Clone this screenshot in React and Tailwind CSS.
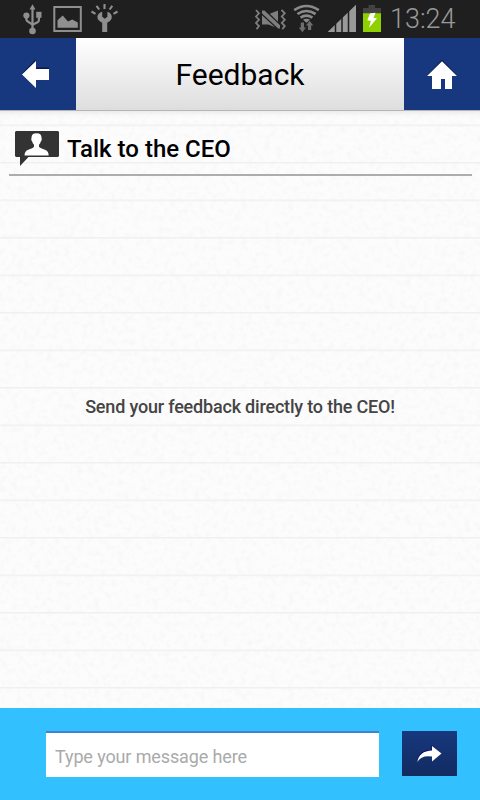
import React from 'react';

function UsbIcon() {
  return (
    <svg className="ml-[23px] h-[38px] w-[20px] shrink-0" viewBox="23 0 20 38" fill="#8f8f8f">
      <path d="M32.5 4.2 35.5 9.6H29.5Z" />
      <circle cx="26.4" cy="15.6" r="3.1" />
      <path d="M36.2 11.800h5.300v6h-5.300z" />
      <circle cx="32.5" cy="31" r="3.3" />
      <path d="M32.5 8v22M26.4 15v4.6q0 1.4 1.4 2l4.7 3M38.9 15v5.2q0 1.4-1.4 2l-5 2.600" fill="none" stroke="#8f8f8f" strokeWidth="2.2" />
    </svg>
  );
}

function PictureIcon() {
  return (
    <svg className="ml-[10px] h-[38px] w-[30px] shrink-0" viewBox="53 0 30 38">
      <path d="M54.3 7h26.500v24H54.3z" fill="none" stroke="#8f8f8f" strokeWidth="2" />
      <path d="M57.500 27.800v-7.500l5.200-4.800 5.300 6 4.200-2 5.600 3v5.300z" fill="#8f8f8f" />
    </svg>
  );
}

function WrenchIcon() {
  return (
    <svg className="ml-[7px] h-[38px] w-[30px] shrink-0" viewBox="90 0 30 38">
      <path d="M102.200 11.800v5l2.600 2 2.600-2v-5c2.600.7 4.400 2.800 4.400 5.200 0 2.600-1.600 4-4.600 5.800V32h-5v-9.200c-3-1.800-4.800-3.200-4.800-5.800 0-2.400 2-4.500 4.800-5.200z" fill="#8f8f8f" />
      <path d="m91.500 11.500 4 2.300M96.500 5.800l2.700 3.700M104.500 4v5M112.300 5.800l-2.700 3.700M117.500 11.500l-4 2.300" stroke="#8f8f8f" strokeWidth="2.100" />
    </svg>
  );
}

function SilentIcon() {
  return (
    <svg className="h-[38px] w-[33px] shrink-0" viewBox="254 0 33 38" fill="#7e7e7e">
      <path d="M262 10.500h2.500L280 25.200v3.300h-1.800L262 13.400z" />
      <path d="M262 15.300 275 27.300 268.500 24.500H262z" />
      <path d="M269.800 13.800 278 10.500V21.700z" />
      <g fill="none" stroke="#7e7e7e" strokeWidth="1.800">
        <path d="m256 10 3 3.300-3 3.200 3 3.200-3 3.200 3 3.200-2.500 3" />
        <path d="m281.500 10 3.300 3.300-3 3.200 3 3.200-3 3.200 3 3.200-2.500 3" />
      </g>
    </svg>
  );
}

function WifiIcon() {
  return (
    <svg className="ml-[6px] h-[38px] w-[27px] shrink-0" viewBox="293 0 27 38">
      <g fill="none" stroke="#898989" strokeWidth="2.700">
        <path d="M294.200 10.200q12.200-8.400 24.600 0" />
        <path d="M297.400 14q9-6 18.200 0" />
        <path d="M300.600 17.700q5.900-4 11.800 0" />
      </g>
      <path d="M303 19.800q3.500-2 7 0l-3.500 3z" fill="#898989" />
      <path d="M300.800 22.500h3.200v5h2l-3.600 4.800-3.600-4.800h2zM308 30h3.200v-4.500h2l-3.600-4.800-3.600 4.800h2z" fill="#6e6e6e" />
    </svg>
  );
}

function SignalIcon() {
  return (
    <svg className="ml-[7px] h-[38px] w-[30px] shrink-0" viewBox="327 0 30 38">
      <path d="M327.600 32 356 4.800V32z" fill="#999" />
      <path d="M335.500 20v13M342 14v19M348.500 8v25" stroke="#1f1f1f" strokeWidth="1.500" />
    </svg>
  );
}

function BatteryIcon() {
  return (
    <svg className="ml-[6px] h-[38px] w-[18px] shrink-0" viewBox="363 0 18 38">
      <path d="M363 8h5.500V5h6.500v3h6v5.300h-18z" fill="#424242" />
      <path d="M363 13.200h18V32h-18z" fill="#8fd000" />
      <path d="m370 13.500 5.500-.7-2 5.200 3.500.3-8 9.500 1.900-6.800-3.600-.8z" fill="white" />
    </svg>
  );
}

function StatusBar() {
  return (
    <div className="flex h-[38px] shrink-0 items-center bg-[#1f1f1f]">
      <UsbIcon />
      <PictureIcon />
      <WrenchIcon />
      <div className="flex-1" />
      <SilentIcon />
      <WifiIcon />
      <SignalIcon />
      <BatteryIcon />
      <span className="ml-[9px] w-[90px] text-[27px] leading-[38px] font-light text-[#999]">13:24</span>
    </div>
  );
}

function Header() {
  return (
    <header className="flex h-[72px] shrink-0">
      <button className="w-[76px] bg-[#17387e]" aria-label="Back">
        <svg className="h-[72px] w-[76px]" viewBox="0 38 76 72">
          <path d="M22 73.500 35.500 59.500V67.500H49V69H36z" fill="#08174f" />
          <path d="M22 74.500 36 61v8h13v11H36v8z" fill="white" />
        </svg>
      </button>
      <h1 className="flex-1 bg-linear-to-b from-white to-[#dedede] text-center text-[30px] leading-[73px] font-normal text-black">Feedback</h1>
      <button className="w-[76px] bg-[#17387e]" aria-label="Home">
        <svg className="h-[72px] w-[76px]" viewBox="404 38 76 72">
          <path d="M426.500 76 442 59.800 457.500 76z" fill="#08174f" />
          <path d="M427 76 442 61.200 457 76h-5v13h-7V79h-4v10h-9V76z" fill="white" />
        </svg>
      </button>
    </header>
  );
}

function PaperTexture() {
  return (
    <svg className="absolute inset-0 h-full w-full" viewBox="0 0 480 598" aria-hidden="true">
      <defs>
        <filter id="grain" x="0" y="0" width="100%" height="100%">
          <feTurbulence type="fractalNoise" baseFrequency="0.17" numOctaves="3" seed="7" />
          <feColorMatrix values="0 0 0 0 0.5  0 0 0 0 0.5  0 0 0 0 0.5  0.2 0 0 0 -0.09" />
        </filter>
        <pattern id="rules" width="480" height="37.500" patternUnits="userSpaceOnUse" y="14.500">
          <path d="M0 .8h480" stroke="#f0f0f0" strokeWidth="1.600" />
        </pattern>
        <linearGradient id="shade" x1="0" y1="0" x2="0" y2="1">
          <stop offset="0" stopColor="#e6e6e6" />
          <stop offset="1" stopColor="#fbfbfb" stopOpacity="0" />
        </linearGradient>
      </defs>
      <path d="M0 0h480v598H0z" fill="#fcfcfc" />
      <path d="M0 0h480v598H0z" filter="url(#grain)" />
      <path d="M0 0h480v598H0z" fill="url(#rules)" />
      <path d="M0 0h480v9H0z" fill="url(#shade)" />
      <path d="M0 0h480v1H0z" fill="#b5b5b5" />
    </svg>
  );
}

function PersonBubble() {
  return (
    <svg className="h-[36px] w-[44px] shrink-0" viewBox="15 131 44 36">
      <path d="M16 131h42l1 1v24l-1 1H28.500L20 166v-9h-4l-1-1v-24z" fill="#333" />
      <path d="M31.500 137.500q0-4.300 5-4.300t5 4.300q.8 2.500-.7 4-.3 2-1.800 3.300v2q1 1.400 6.500 3.200 3 1 3.200 5.500H24.500q.2-4.500 3.200-5.500 5.500-1.800 6.300-3.200v-2q-1.500-1.300-1.800-3.300-1.500-1.500-.7-4z" fill="white" />
    </svg>
  );
}

export default function App() {
  return (
    <div className="flex h-[800px] w-[480px] flex-col overflow-hidden font-['Roboto',sans-serif]">
      <StatusBar />
      <Header />
      <main className="relative flex flex-1 flex-col">
        <PaperTexture />
        <div className="relative mr-2 ml-[9px] flex h-[66px] items-start border-b-2 border-[#adadad] pt-[21px] pl-[6px]">
          <PersonBubble />
          <h2 className="ml-2 text-[24px] leading-[36px] font-medium whitespace-nowrap text-black">Talk to the CEO</h2>
        </div>
        <p className="relative mt-[219px] text-center text-[18px] leading-6 font-medium tracking-[-0.19px] text-[#444]">Send your feedback directly to the CEO!</p>
      </main>
      <footer className="flex h-[92px] shrink-0 items-start bg-[#33c0ff] pt-[23px] pl-[46px]">
        <input className="h-[46px] w-[333px] border-t-2 border-[#3f83cf] bg-white pt-[3px] pl-[9px] text-[18px] tracking-[-0.12px] outline-none placeholder:text-[#aaa]" placeholder="Type your message here" />
        <button className="ml-[23px] h-[45px] w-[55px] bg-linear-to-b from-[#17387e] to-[#122b61]" aria-label="Send">
          <svg className="h-[45px] w-[55px]" viewBox="402 731 55 45">
            <path d="M417.300 761.500Q418 750 431.500 749.500V745L441 753H432Q421 753 417.300 761.500z" fill="#080c70" />
            <path d="M417.300 762Q419 751 432 750.500V746L441.500 753.500 432 761.500V756.500Q421.500 754.800 417.300 762z" fill="white" />
          </svg>
        </button>
      </footer>
    </div>
  );
}
